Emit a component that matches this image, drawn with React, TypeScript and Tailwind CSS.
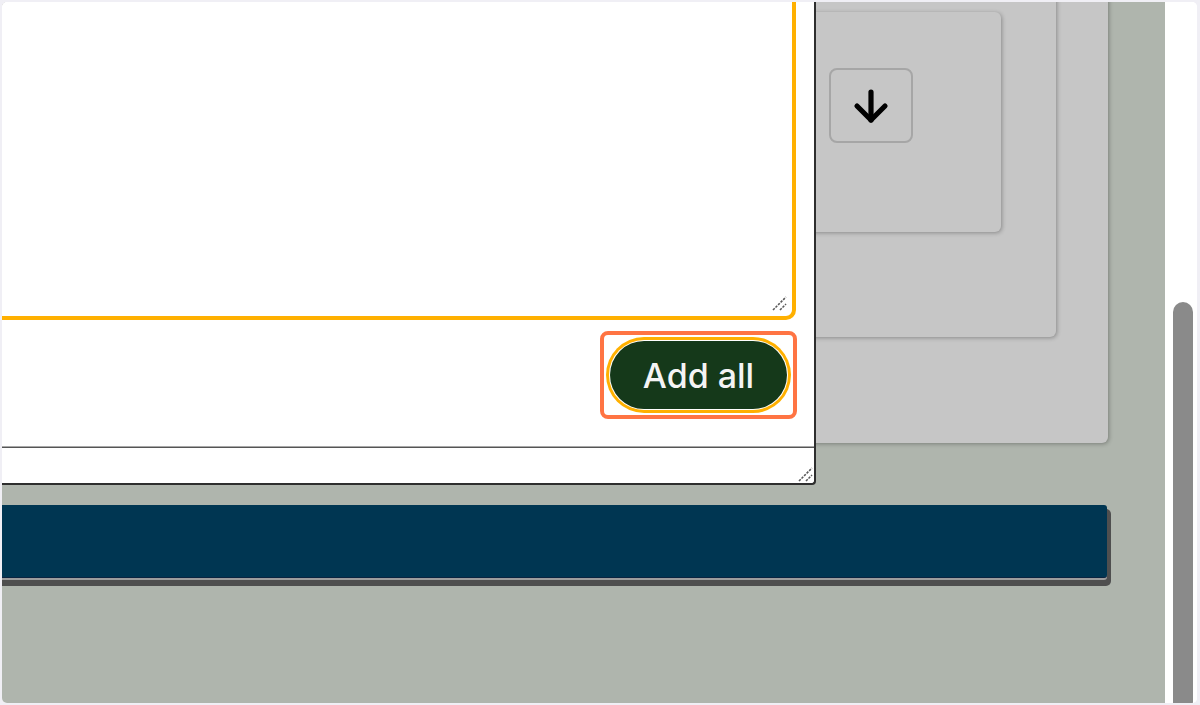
import React from 'react';
import { ArrowDown } from 'lucide-react';

const Grip = ({ className }: { className?: string }) => (
  <svg width="16" height="16" viewBox="0 0 16 16" className={className}>
    <path d="M2 15 L15 2 M9 15 L15 9" stroke="#5a5a5a" strokeWidth="1.6" strokeDasharray="2.4 1.2" fill="none" />
  </svg>
);

export default function App() {
  return (
    <div className="w-[1200px] h-[705px] bg-[#f0eff5] pt-[2px] pl-[2px] pb-[2px] pr-[3px] font-['Inter',sans-serif]">
      <div className="flex h-full overflow-hidden rounded-[5px] bg-white">
        {/* main canvas */}
        <div className="relative flex-1 overflow-hidden bg-[#afb5ad]">
          {/* nested panels */}
          <div className="-mt-[40px] flex h-[481px] w-[1106px] justify-end rounded-[6px] bg-[#c6c6c6] pr-[52px] pb-[106px] shadow-[1px_1px_4px_rgba(0,0,0,0.3)]">
            <div className="flex h-full w-[600px] items-start justify-end rounded-[6px] bg-[#c6c6c6] pt-[50px] pr-[55px] shadow-[1px_1px_4px_rgba(0,0,0,0.3)]">
              <div className="h-[220px] w-[300px] rounded-[6px] bg-[#c6c6c6] pt-[56px] pl-[128px] shadow-[1px_1px_4px_rgba(0,0,0,0.3)]">
                <button className="flex h-[75px] w-[84px] items-center justify-center rounded-[8px] border-2 border-[#a6a6a6] bg-[#c6c6c6]">
                  <ArrowDown size={48} strokeWidth={2.6} color="#000" />
                </button>
              </div>
            </div>
          </div>

          {/* blue bar */}
          <div className="mt-[62px] h-[73px] w-[1105px] rounded-r-[3px] border-b border-[#0b2440] bg-[#003652] shadow-[0_2px_0_#9d9d9d,2px_6px_0_2px_#4f4f4f]" />

          {/* dialog overlay */}
          <div className="absolute left-0 top-0 flex h-[483px] w-[814px] flex-col overflow-hidden rounded-br-[4px] border-r-2 border-b-2 border-[#2e2e2e] bg-white">
            <div className="relative -ml-[20px] -mt-[20px] mr-[18px] h-[338px] rounded-[10px] border-4 border-[#ffb000] bg-white">
              <Grip className="absolute right-[5px] bottom-[5px]" />
            </div>
            <div className="mt-[11px] flex justify-end pr-[17px]">
              <div className="rounded-[8px] border-4 border-[#ff7443] px-[2px] py-[2px]">
                <button className="m-[4px] flex h-[68px] w-[177px] items-center justify-center rounded-full bg-[#15391a] text-[34px] font-medium text-[#f4f4f4] shadow-[0_0_0_1px_#ffffff,0_0_0_4px_#ffb000]">
                  Add all
                </button>
              </div>
            </div>
            <div className="mt-[27px] h-[2px] w-full border-t border-[#a8a8a8] bg-[#555]" />
            <div className="relative flex-1">
              <Grip className="absolute right-[1px] bottom-[1px]" />
            </div>
          </div>
        </div>

        {/* scrollbar */}
        <div className="flex w-[32px] flex-col bg-white pl-[8px] pt-[300px]">
          <div className="w-[20px] flex-1 rounded-t-full bg-[#8a8a8a]" />
        </div>
      </div>
    </div>
  );
}
